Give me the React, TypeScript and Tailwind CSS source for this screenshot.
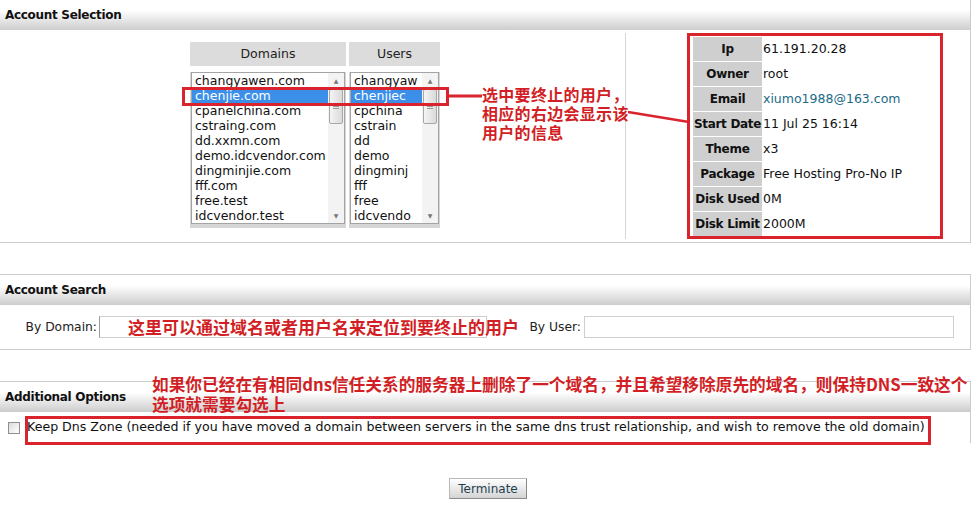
const domains = [
  "changyawen.com",
  "chenjie.com",
  "cpanelchina.com",
  "cstraing.com",
  "dd.xxmn.com",
  "demo.idcvendor.com",
  "dingminjie.com",
  "fff.com",
  "free.test",
  "idcvendor.test",
];

const users = ["changyaw", "chenjiec", "cpchina", "cstrain", "dd", "demo", "dingminj", "fff", "free", "idcvendo"];

const info: [string, string][] = [
  ["Ip", "61.191.20.28"],
  ["Owner", "root"],
  ["Email", "xiumo1988@163.com"],
  ["Start Date", "11 Jul 25 16:14"],
  ["Theme", "x3"],
  ["Package", "Free Hosting Pro-No IP"],
  ["Disk Used", "0M"],
  ["Disk Limit", "2000M"],
];

function SectionHeader({ title }: { title: string }) {
  return (
    <div className="h-[30px] flex items-center pl-[5px] bg-linear-to-b from-white from-35% to-[#cdcdcd] font-bold text-[12px] tracking-[-0.3px] text-[#111]">
      {title}
    </div>
  );
}

function ListBox({ title, items, width }: { title: string; items: string[]; width: string }) {
  return (
    <div className={`flex flex-col ${width}`}>
      <div className="h-[24px] bg-[#dcdcdc] flex items-center justify-center text-[12.5px] text-[#222]">{title}</div>
      <div className="mt-[6px] bg-[#d6d6d6] px-[1px] pt-0 pb-[4px]">
        <div className="flex border border-[#a4a4a4] bg-white h-[152px]">
          <div className="flex-1 flex flex-col">
            {items.map((it, i) => (
              <div
                key={it}
                className={`h-[15px] leading-[15px] pl-[3px] whitespace-nowrap overflow-hidden text-[12.5px] ${
                  i === 1 ? "bg-[#3b8fe8] text-white" : "text-[#111]"
                }`}
              >
                {it}
              </div>
            ))}
          </div>
          <div className="w-[16px] bg-[#f3f3f3] flex flex-col items-center">
            <div className="h-[15px] flex items-center justify-center text-[6px] text-[#777]">▲</div>
            <div className="w-[14px] h-[35px] mt-[1px] rounded-[2px] border border-[#a8a8a8] bg-linear-to-r from-[#f4f4f4] to-[#dadada] flex flex-col items-center justify-center gap-[1px]">
              <div className="w-[6px] h-px bg-[#999]" />
              <div className="w-[6px] h-px bg-[#999]" />
              <div className="w-[6px] h-px bg-[#999]" />
            </div>
            <div className="flex-1" />
            <div className="h-[15px] flex items-center justify-center text-[6px] text-[#777]">▼</div>
          </div>
        </div>
      </div>
    </div>
  );
}

export default function App() {
  return (
    <div className="relative w-[973px] h-[505px] bg-white overflow-hidden font-['DejaVu_Sans','Noto_Sans_CJK_SC',sans-serif] text-[12px] text-[#111]">
      {/* Account Selection */}
      <div className="w-[971px] border-r border-[#cccccc]">
        <SectionHeader title="Account Selection" />
        <div className="flex h-[213px] border-b border-[#cccccc]">
          <div className="w-[625px] flex justify-center gap-[3px] pt-[12px] pl-[5px]">
            <ListBox title="Domains" items={domains} width="w-[156px]" />
            <ListBox title="Users" items={users} width="w-[91px]" />
          </div>
          <div className="flex-1 my-[3px] border-l border-[#d6d6d6] pl-[61px]">
            <div className="w-[256px] border-[3px] border-[#d9232d] px-[3px] pt-[1px] flex flex-col gap-px">
              {info.map(([k, v]) => (
                <div key={k} className="flex h-[24px] items-center">
                  <div className="w-[69px] h-full bg-[#cfcfcf] flex items-center justify-center font-bold text-[12px] tracking-[-0.3px] whitespace-nowrap">
                    {k}
                  </div>
                  <div className={`pl-[1px] text-[12.5px] whitespace-nowrap ${k === "Email" ? "text-[#1d6a86]" : "text-[#111]"}`}>
                    {v}
                  </div>
                </div>
              ))}
            </div>
          </div>
        </div>
      </div>

      {/* Account Search */}
      <div className="mt-[31px] w-[971px] border-t border-r border-b border-[#cccccc]">
        <SectionHeader title="Account Search" />
        <div className="h-[44px] flex items-center">
          <div className="w-[99px] text-right pr-[2px] text-[12.3px] text-[#222]">By Domain:</div>
          <div className="relative w-[388px] h-[22px] border border-[#cfcfcf] border-l-[#9a9a9a]">
            <div className="absolute left-[28px] top-[-1px] whitespace-nowrap font-['Noto_Sans_CJK_SC',sans-serif] font-bold text-[17px] leading-[22px] text-[#d21f26]">
              这里可以通过域名或者用户名来定位到要终止的用户
            </div>
          </div>
          <div className="w-[97px] text-right pr-[3px] text-[12.3px] text-[#222]">By User:</div>
          <div className="w-[370px] h-[22px] border border-[#cfcfcf]" />
        </div>
      </div>

      {/* Additional Options */}
      <div className="mt-[31px] w-[971px] border-t border-r border-[#cccccc]">
        <SectionHeader title="Additional Options" />
        <div className="h-[31px] flex items-center pl-[8px]">
          <span className="w-[12px] h-[12px] border border-[#8f8f8f] bg-linear-to-br from-[#dcdcdc] to-white" />
          <span className="ml-[7px] whitespace-nowrap text-[12.6px] text-[#111]">
            Keep Dns Zone (needed if you have moved a domain between servers in the same dns trust relationship, and wish to remove the old domain)
          </span>
        </div>
      </div>

      {/* Terminate */}
      <div className="mt-[35px] w-[973px] flex justify-center pl-[3px]">
        <button className="w-[78px] h-[21px] border border-[#b8b8b8] border-r-[#8a8a8a] border-b-[#8a8a8a] bg-linear-to-b from-white to-[#d4d4d4] text-[12px] text-[#1f3f4f]">
          Terminate
        </button>
      </div>

      {/* annotations */}
      <div className="absolute left-[182px] top-[87px] w-[267px] h-[19px] border-[3px] border-[#d9232d]" />
      <div className="absolute left-[25px] top-[416px] w-[906px] h-[29px] border-[3px] border-[#d9232d]" />
      <svg className="absolute left-0 top-0 pointer-events-none" width="973" height="505">
        <line x1="449" y1="96" x2="482" y2="96" stroke="#d9232d" strokeWidth="3" />
        <line x1="628" y1="112" x2="689" y2="122" stroke="#d9232d" strokeWidth="2.5" />
      </svg>
      <div className="absolute left-[482px] top-[85px] font-['Noto_Sans_CJK_SC',sans-serif] font-bold text-[16px] leading-[19px] tracking-[0.3px] text-[#d21f26]">
        <div>选中要终止的用户，</div>
        <div>相应的右边会显示该</div>
        <div>用户的信息</div>
      </div>
      <div className="absolute left-[152px] top-[374px] whitespace-nowrap font-['Noto_Sans_CJK_SC',sans-serif] font-bold text-[16.7px] leading-[20px] text-[#d21f26]">
        <div>如果你已经在有相同dns信任关系的服务器上删除了一个域名，并且希望移除原先的域名，则保持DNS一致这个</div>
        <div>选项就需要勾选上</div>
      </div>
    </div>
  );
}
